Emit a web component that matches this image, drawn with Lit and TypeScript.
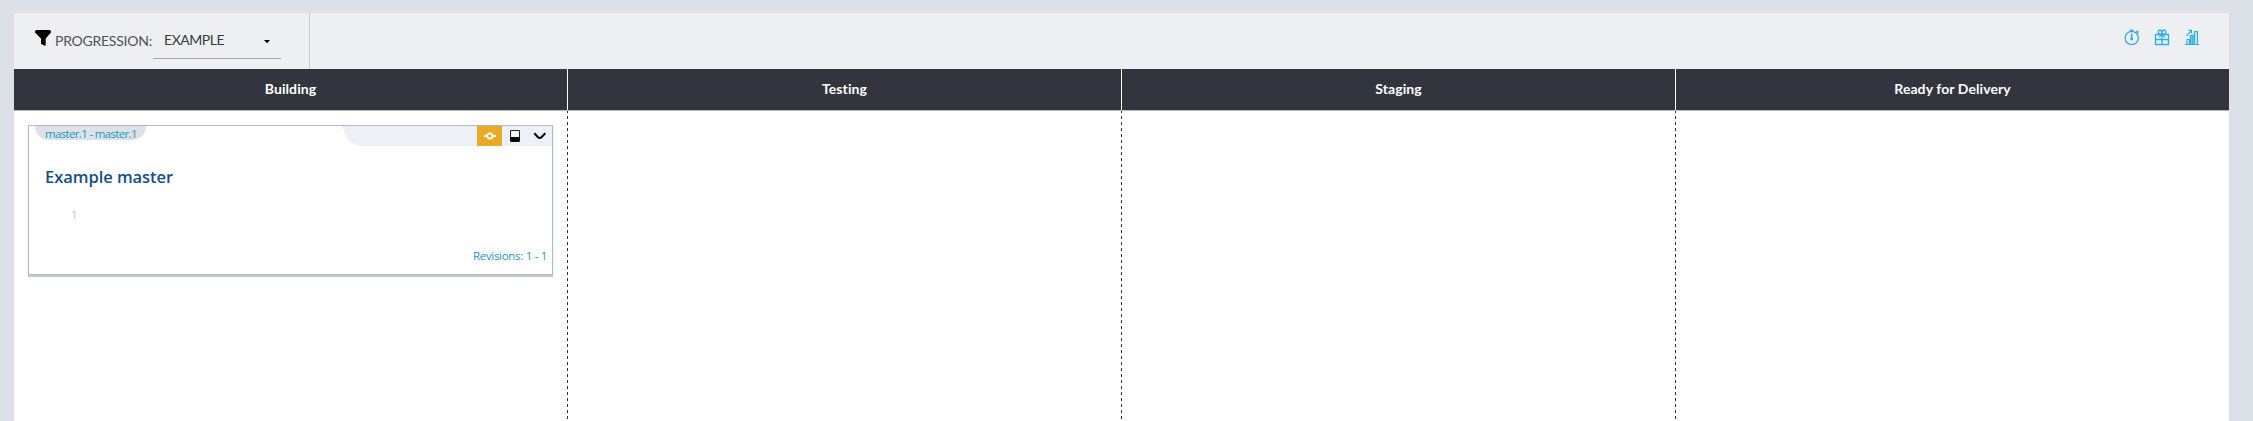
import { LitElement, html, css } from "lit";
import { customElement, property } from "lit/decorators.js";

const timer = html`<svg width="16" height="17" viewBox="0 0 16 17" fill="none" stroke="#2bb0e0" stroke-width="1.3"><circle cx="7.7" cy="9" r="6.6"/><path d="M5.8 1.200h3.6M7.6 1v2.2M12.2 2.2l2.200 2M13.800 1.800v2.600"/><path d="M7.600 4.600v5.200" stroke-width="1.500"/><circle cx="7.600" cy="10" r=".8"/></svg>`;
const gift = html`<svg width="16" height="17" viewBox="0 0 16 17" fill="none" stroke="#2bb0e0" stroke-width="1.3"><path d="M1.500 5.500h13v10h-13zM1.500 10.500h13M8 5.500v10"/><path d="M8 5.400C3.200 6 3.600 1 5.800 1C7.500 1 8 3 8 5.400C8 3 8.500 1 10.200 1c2.200 0 2.600 5-2.200 4.400zM8 5.400L5.200 8M8 5.400L10.800 8"/></svg>`;
const chart = html`<svg width="16" height="17" viewBox="0 0 16 17" fill="none" stroke="#2bb0e0" stroke-width="1.2"><path d="M6.500 6.500h2.400v9H6.500zM8.900 4.500h1.600v11H8.900z" fill="#7ccdea" stroke="none"/><path d="M.8 15.500h14.400M3 15.500v-5h2.400v5M6.500 15.500V6.500h2.400v9M10.700 15.500V2.600h2.700v12.900"/><path d="M2.500 6.800l4.800-5M4.300 1.400h3.200v3.100"/></svg>`;

@customElement("release-card")
class ReleaseCard extends LitElement {
  @property() tag = "";
  @property() name = "";
  @property() count = "";
  @property() revisions = "";
  static styles = css`
    :host { display: flex; flex-direction: column; box-sizing: border-box; height: 150px; border: 1px solid #b5b8c5; background: #fff; box-shadow: 0 2px 1px #c9c9cc; font-family: "Open Sans", "Noto Sans", sans-serif; font-size: 11.5px; }
    .top { display: flex; justify-content: space-between; align-items: flex-start; height: 41px; }
    .tag { box-sizing: border-box; width: 111px; height: 14px; margin-left: 6px; padding-left: 10px; background: #dce1e8; border-radius: 0 0 14px 14px; color: #2995bd; line-height: 16px; letter-spacing: -.66px; white-space: nowrap; }
    .tools { display: flex; height: 20px; }
    .fill { width: 114px; background: #ecf1f8; }
    .tool { width: 25px; height: 20px; background: #ecf1f8; }
    .active { background: #e9aa27; }
    svg { display: block; }
    .name { margin-left: 16px; height: 20px; line-height: 20px; font-size: 16.5px; font-weight: 600; letter-spacing: -.05px; color: #134f86; }
    .count { margin: 20px 0 0 42px; height: 16px; line-height: 16px; color: #bfc3ca; }
    .rev { margin: auto 5px 10px 0; text-align: right; line-height: 16px; letter-spacing: -.3px; color: #2995bd; }
  `;
  render() {
    return html`
      <div class="top">
        <div class="tag">${this.tag}</div>
        <div class="tools">
          <svg width="22" height="20" viewBox="0 0 22 20"><path fill="#ecf1f8" d="M0 0H22V20C11 20 6 13 4 8Q2.500 3 0 0z"/></svg>
          <div class="fill"></div>
          <div class="tool active"><svg width="25" height="20" viewBox="0 0 25 20" fill="none" stroke="#fff" stroke-width="1.800"><circle cx="12.900" cy="10" r="2.600"/><path d="M7 10h3.200M15.600 10H19"/></svg></div>
          <div class="tool"><svg width="25" height="20" viewBox="0 0 25 20"><path d="M8.500 4.500h9v11h-9z" fill="#f5f7fa" stroke="#222"/><path d="M8.500 11h9v4.500h-9z"/></svg></div>
          <div class="tool"><svg width="25" height="20" viewBox="0 0 25 20"><path d="M7.300 7.300L11 11.200Q12.700 12.800 14.400 11.200L18.300 7.300" fill="none" stroke="#000" stroke-width="2"/></svg></div>
        </div>
      </div>
      <div class="name">${this.name}</div>
      <div class="count">${this.count}</div>
      <div class="rev">${this.revisions}</div>
    `;
  }
}

@customElement("app-root")
class AppRoot extends LitElement {
  static styles = css`
    :host { display: flex; flex-direction: column; box-sizing: border-box; height: 421px; padding: 13px 24px 0 14px; background: #dce1e8; font-family: Lato, "Liberation Sans", sans-serif; overflow: hidden; }
    .bar { display: flex; height: 56px; background: #eeeff3; }
    .filter { display: flex; box-sizing: border-box; width: 296px; padding-left: 21px; border-right: 1px solid #c6c9cf; }
    .funnel { margin-top: 17px; }
    .label { width: 98px; margin: 18px 0 0 4px; line-height: 20px; font-size: 14px; letter-spacing: -.25px; color: #505257; white-space: nowrap; }
    .select { display: flex; justify-content: space-between; box-sizing: border-box; width: 128px; height: 46px; padding: 17px 11px 0 11px; border-bottom: 1px solid #a5a7ac; line-height: 20px; font-size: 14px; letter-spacing: -.45px; color: #393b40; }
    .caret { margin-top: 10px; }
    .actions { display: flex; gap: 14px; margin: 16px 29px 0 auto; }
    .board { display: grid; grid-template-columns: 554px 554px 554px 1fr; flex: 1; background: #fff; }
    .col { display: flex; flex-direction: column; }
    .head { height: 41px; box-sizing: border-box; border-right: 1px solid #fff; background: #32353e; color: #fff; text-align: center; line-height: 40px; font-size: 14px; font-weight: 700; letter-spacing: .08px; }
    .col:last-child .head { border-right: 0; }
    .body { flex: 1; border-top: 1px solid #b5b8c5; padding: 14px 15px 0 14px; background: repeating-linear-gradient(#333 0 2px, transparent 2px 5px, #333 5px 6px) right top / 1px 100% no-repeat; }
    .col:last-child .body { background: none; }
  `;
  render() {
    return html`
      <div class="bar">
        <div class="filter">
          <svg class="funnel" width="16" height="16" viewBox="0 0 16 16"><path d="M1.500 0h13q1.500 0 1.500 1.500v1L10.700 8.500V15q0 1-1.200.7L6 13.700V8.500L0 2.500v-1Q0 0 1.500 0z"/></svg>
          <span class="label">PROGRESSION:</span>
          <div class="select"><span>EXAMPLE</span><svg class="caret" width="6" height="4" viewBox="0 0 6 4"><path d="M0 0h6L3 3.200z"/></svg></div>
        </div>
        <div class="actions">${timer}${gift}${chart}</div>
      </div>
      <div class="board">
        ${["Building", "Testing", "Staging", "Ready for Delivery"].map((t, i) => html`
          <div class="col">
            <div class="head">${t}</div>
            <div class="body">${i === 0 ? html`<release-card tag="master.1 - master.1" name="Example master" count="1" revisions="Revisions: 1 - 1"></release-card>` : ""}</div>
          </div>`)}
      </div>
    `;
  }
}
